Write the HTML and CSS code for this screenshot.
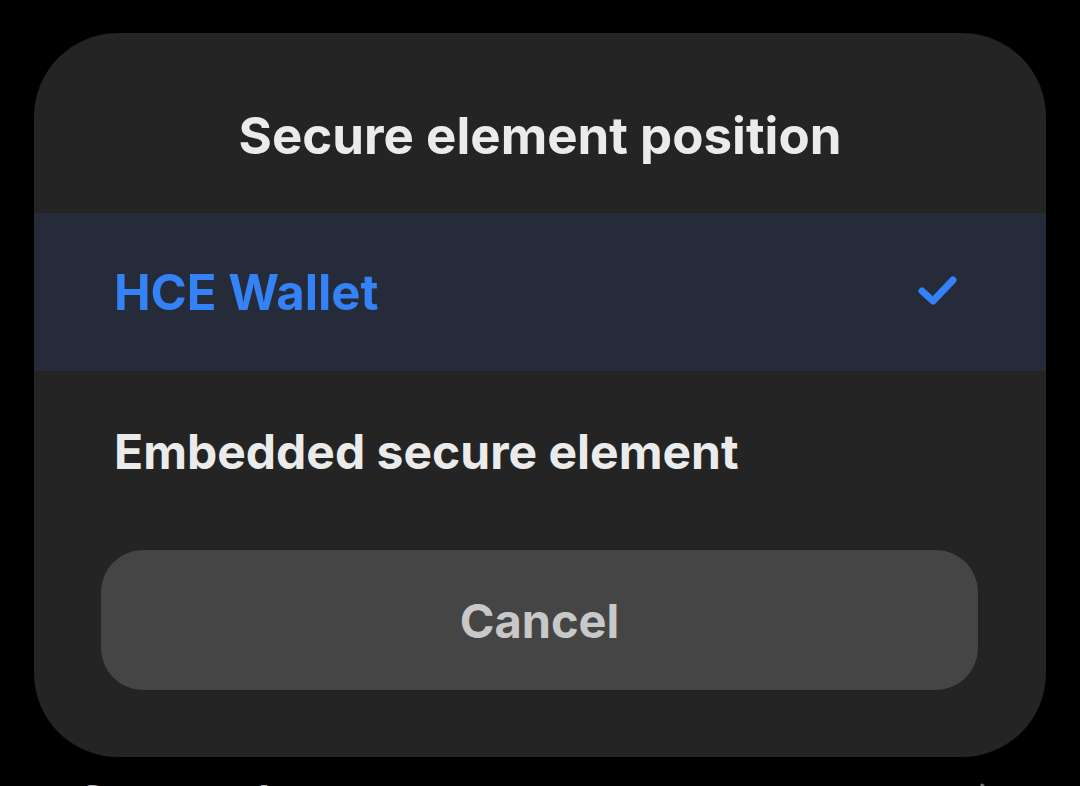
FILE: index.html
```html
<html lang="en">
<head>
    <title>Secure element position</title>
    <link rel="stylesheet" href="styles.css">
</head>
<body>

<div class="dialog">
    <h1 class="dialog-title">Secure element position</h1>
    <div class="option selected">
        <span>HCE Wallet</span>
        <svg class="check" width="44" height="36" viewBox="0 0 44 36">
            <path d="M6 17 L17 27 L37 6" fill="none" stroke="#3482f6" stroke-width="7" stroke-linecap="round" stroke-linejoin="round"/>
        </svg>
    </div>
    <div class="option">
        <span>Embedded secure element</span>
    </div>
    <button class="cancel">Cancel</button>
</div>

<div class="behind">
    <span>Contactless payments</span>
    <svg class="chevron" width="24" height="40" viewBox="0 0 24 40">
        <path d="M4 4 L18 20 L4 36" fill="none" stroke="#777" stroke-width="3" stroke-linecap="round"/>
    </svg>
</div>

</body>
</html>
```

FILE: styles.css
```css
:root {
    --background: #000;
    --dialog: #242424;
    --selected: #252b38;
    --text: #ebebeb;
    --primary: #3482f6;
    --button: #454545;
    --button-text: #c8c8c8;
}

* {
    box-sizing: border-box;
}

html, body {
    margin: 0;
    padding: 0;
    background: var(--background);
    overflow: hidden;
    height: 100%;
    font-family: "Inter", "Roboto", sans-serif;
}

body {
    padding: 33px 34px 0;
}

.dialog {
    width: 1012px;
    height: 724px;
    background: var(--dialog);
    border-radius: 84px;
    display: flex;
    flex-direction: column;
}

.dialog-title {
    margin: 0;
    height: 180px;
    display: flex;
    align-items: center;
    justify-content: center;
    padding-top: 24px;
    font-size: 51px;
    font-weight: 700;
    color: var(--text);
}

.option {
    height: 158px;
    display: flex;
    align-items: center;
    justify-content: space-between;
    padding: 0 86px 0 80px;
    font-size: 48px;
    font-weight: 700;
    color: var(--text);
}

.option + .option {
    height: 160px;
}

.option.selected {
    background: var(--selected);
    color: var(--primary);
    font-size: 49px;
}

.check {
    display: block;
}

.cancel {
    margin: 19px 68px 0 67px;
    height: 140px;
    border: none;
    border-radius: 42px;
    background: var(--button);
    color: var(--button-text);
    font-family: inherit;
    font-size: 47px;
    font-weight: 700;
}

.behind {
    margin-top: 16px;
    padding: 0 44px 0 40px;
    display: flex;
    justify-content: space-between;
    align-items: flex-start;
    font-size: 48px;
    font-weight: 600;
    color: #b4b4b4;
}

.chevron {
    margin-top: 8px;
}
```
